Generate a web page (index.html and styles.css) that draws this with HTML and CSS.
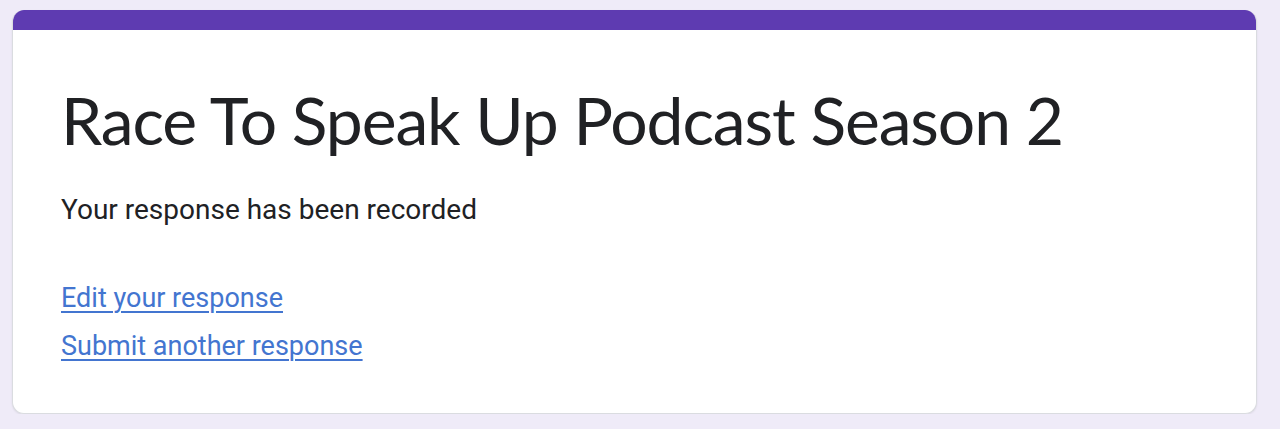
FILE: index.html
```html
<!DOCTYPE html>
<html lang="en">
<head>
  <meta charset="UTF-8">
  <title>Race To Speak Up Podcast Season 2</title>
  <link rel="stylesheet" href="styles.css">
</head>
<body>
  <div class="card">
    <div class="card-top"></div>
    <div class="card-body">
      <h1 class="title">Race To Speak Up Podcast Season 2</h1>
      <div class="message">Your response has been recorded</div>
      <div class="links">
        <a href="#">Edit your response</a>
        <a href="#">Submit another response</a>
      </div>
    </div>
  </div>
</body>
</html>
```

FILE: styles.css
```css
html, body {
  margin: 0;
  padding: 0;
  background: #efebf8;
  font-family: Roboto, Arial, sans-serif;
  color: #202124;
}
body {
  padding: 10px 23px 0 12px;
}
.card {
  background: #fff;
  border-radius: 12px;
  border: 1px solid #dadce0;
  border-top: none;
  overflow: hidden;
  box-shadow: 0 1px 2px rgba(0, 0, 0, 0.08);
}
.card-top {
  height: 20px;
  background: #5e3bb1;
}
.card-body {
  padding: 50px 48px 51px 48px;
}
.title {
  margin: 0;
  font-family: Lato, "Open Sans", sans-serif;
  font-weight: 400;
  font-size: 66px;
  line-height: 80px;
  letter-spacing: -1.1px;
}
.message {
  margin-top: 34px;
  font-size: 28px;
  line-height: 32px;
}
.links {
  margin-top: 56px;
  display: flex;
  flex-direction: column;
  align-items: flex-start;
  gap: 16px;
}
.links a {
  color: #4375d0;
  font-size: 27px;
  line-height: 32px;
  text-decoration: underline;
  text-underline-offset: 4px;
  text-decoration-thickness: 2px;
}
```
